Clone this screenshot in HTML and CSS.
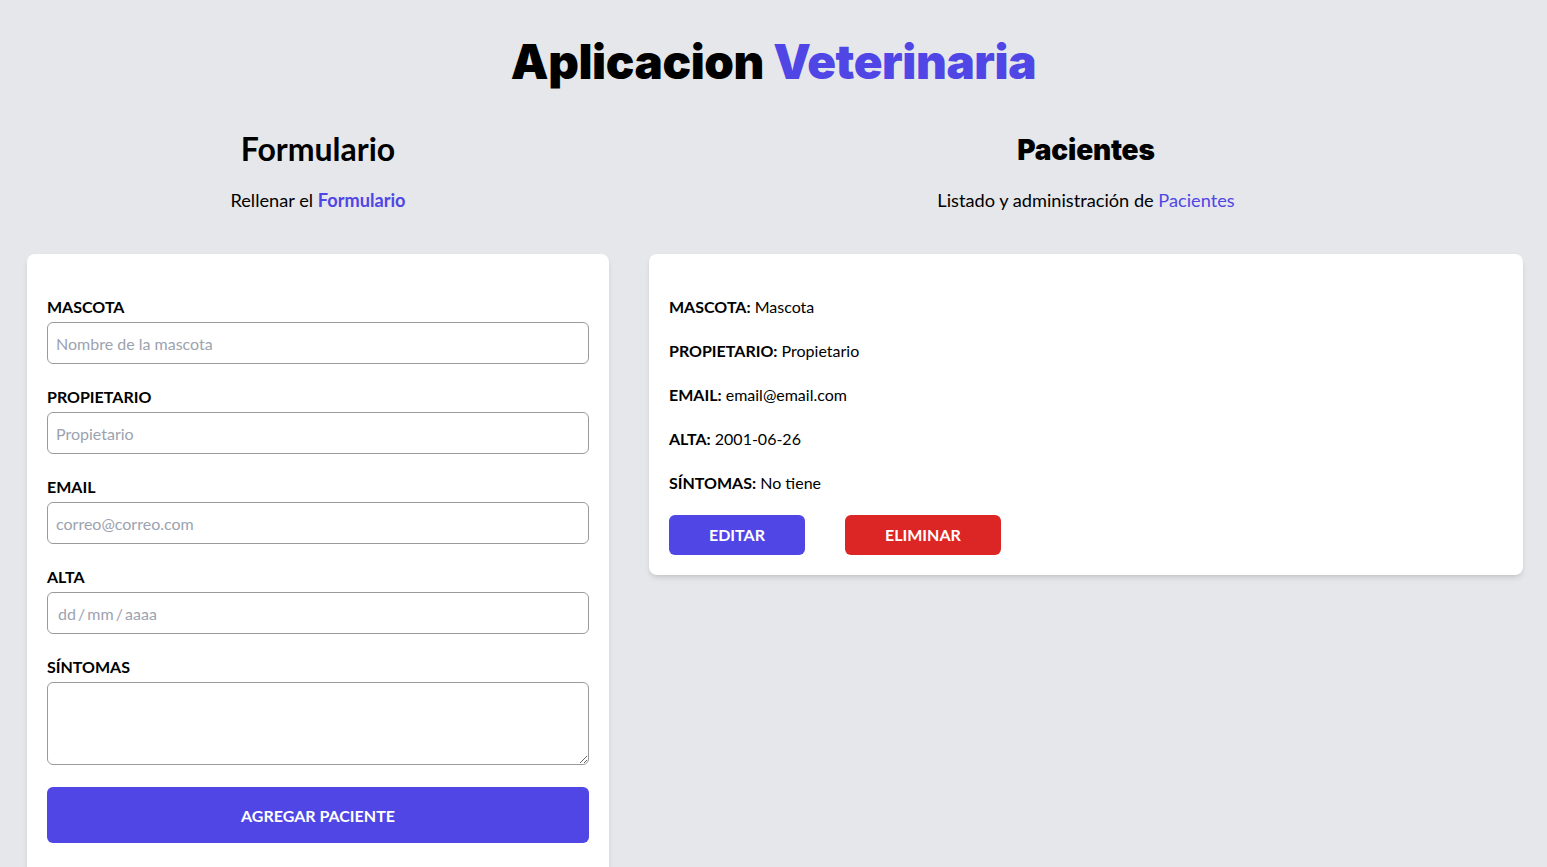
FILE: index.html
```html
<!DOCTYPE html>
<html lang="es">
<head>
<meta charset="utf-8">
<title>Aplicacion Veterinaria</title>
<link rel="stylesheet" href="styles.css">
</head>
<body>
<div class="app">
  <h1 class="title">Aplicacion <span class="accent">Veterinaria</span></h1>
  <div class="columns">
    <section class="col col-form">
      <h2 class="heading heading-form">Formulario</h2>
      <p class="sub">Rellenar el <span class="accent bold">Formulario</span></p>
      <form class="card form-card">
        <label class="label" for="mascota">MASCOTA</label>
        <input class="field" id="mascota" type="text" placeholder="Nombre de la mascota">
        <label class="label" for="propietario">PROPIETARIO</label>
        <input class="field" id="propietario" type="text" placeholder="Propietario">
        <label class="label" for="email">EMAIL</label>
        <input class="field" id="email" type="email" placeholder="correo@correo.com">
        <label class="label" for="alta">ALTA</label>
        <input class="field field-date" id="alta" type="text" placeholder="dd / mm / aaaa">
        <label class="label" for="sintomas">SÍNTOMAS</label>
        <textarea class="field area" id="sintomas"></textarea>
        <button type="button" class="btn-submit">AGREGAR PACIENTE</button>
      </form>
    </section>
    <section class="col col-list">
      <h2 class="heading heading-list">Pacientes</h2>
      <p class="sub">Listado y administración de <span class="accent">Pacientes</span></p>
      <div class="card list-card">
        <p class="row"><strong>MASCOTA:</strong> Mascota</p>
        <p class="row"><strong>PROPIETARIO:</strong> Propietario</p>
        <p class="row"><strong>EMAIL:</strong> email@email.com</p>
        <p class="row"><strong>ALTA:</strong> 2001-06-26</p>
        <p class="row"><strong>SÍNTOMAS:</strong> No tiene</p>
        <div class="actions">
          <button type="button" class="btn btn-edit">EDITAR</button>
          <button type="button" class="btn btn-delete">ELIMINAR</button>
        </div>
      </div>
    </section>
  </div>
</div>
</body>
</html>
```

FILE: styles.css
```css
* { box-sizing: border-box; }
html, body { margin: 0; padding: 0; }
body {
  background: #e5e7eb;
  font-family: Lato, "Noto Sans", sans-serif;
  color: #000;
  font-size: 16px;
  line-height: 24px;
  overflow: hidden;
  height: 867px;
}
.app { padding-top: 34px; }
.title {
  margin: 0;
  text-align: center;
  font-family: Inter, "Noto Sans", sans-serif;
  font-size: 47.5px;
  line-height: 56px;
  font-weight: 900;
  letter-spacing: -0.4px;
}
.accent { color: #4f46e5; }
.bold { font-weight: 700; }
.columns {
  display: flex;
  gap: 40px;
  padding: 0 24px 0 27px;
  margin-top: 41px;
  align-items: flex-start;
}
.col-form { width: 582px; flex: none; }
.col-list { flex: 1; }
.heading {
  margin: 0;
  text-align: center;
  font-size: 32px;
  line-height: 36px;
}
.heading-form { font-weight: 700; }
.heading-list {
  font-family: Inter, "Noto Sans", sans-serif;
  font-weight: 900;
  font-size: 28px;
  line-height: 40px;
  margin-top: -1px;
  margin-bottom: -3px;
  letter-spacing: -0.2px;
}
.sub {
  margin: 19px 0 0;
  text-align: center;
  font-size: 18.2px;
  line-height: 28px;
}
.card {
  background: #fff;
  border-radius: 8px;
  box-shadow: 0 4px 6px -1px rgba(0,0,0,0.1), 0 2px 4px -2px rgba(0,0,0,0.1);
  margin-top: 40px;
}
.form-card {
  padding: 41px 20px 40px;
  display: flex;
  flex-direction: column;
}
.label {
  display: block;
  font-weight: 700;
  font-size: 16px;
  line-height: 24px;
}
.field {
  display: block;
  width: 100%;
  margin: 3px 0 21px;
  height: 42px;
  padding: 8px;
  border: 1px solid #9a9a9a;
  border-radius: 6px;
  font-family: Lato, "Noto Sans", sans-serif;
  font-size: 16px;
  line-height: 24px;
  background: #fff;
}
.field::placeholder { color: #9ca3af; }
.field-date { padding-left: 10px; word-spacing: -2px; }
.area { height: 83px; resize: vertical; margin-bottom: 22px; }
.btn-submit {
  width: 100%;
  height: 56px;
  border: 0;
  border-radius: 6px;
  background: #4f46e5;
  color: #fff;
  font-family: Lato, "Noto Sans", sans-serif;
  font-weight: 700;
  font-size: 16px;
}
.list-card { padding: 41px 20px 20px; }
.row { margin: 0 0 20px; }
.row strong { font-weight: 700; }
.actions { display: flex; gap: 40px; }
.btn {
  border: 0;
  border-radius: 6px;
  color: #fff;
  font-family: Lato, "Noto Sans", sans-serif;
  font-weight: 700;
  font-size: 16px;
  line-height: 24px;
  padding: 8px 40px;
}
.btn-edit { background: #4f46e5; }
.btn-delete { background: #dc2626; }
```
